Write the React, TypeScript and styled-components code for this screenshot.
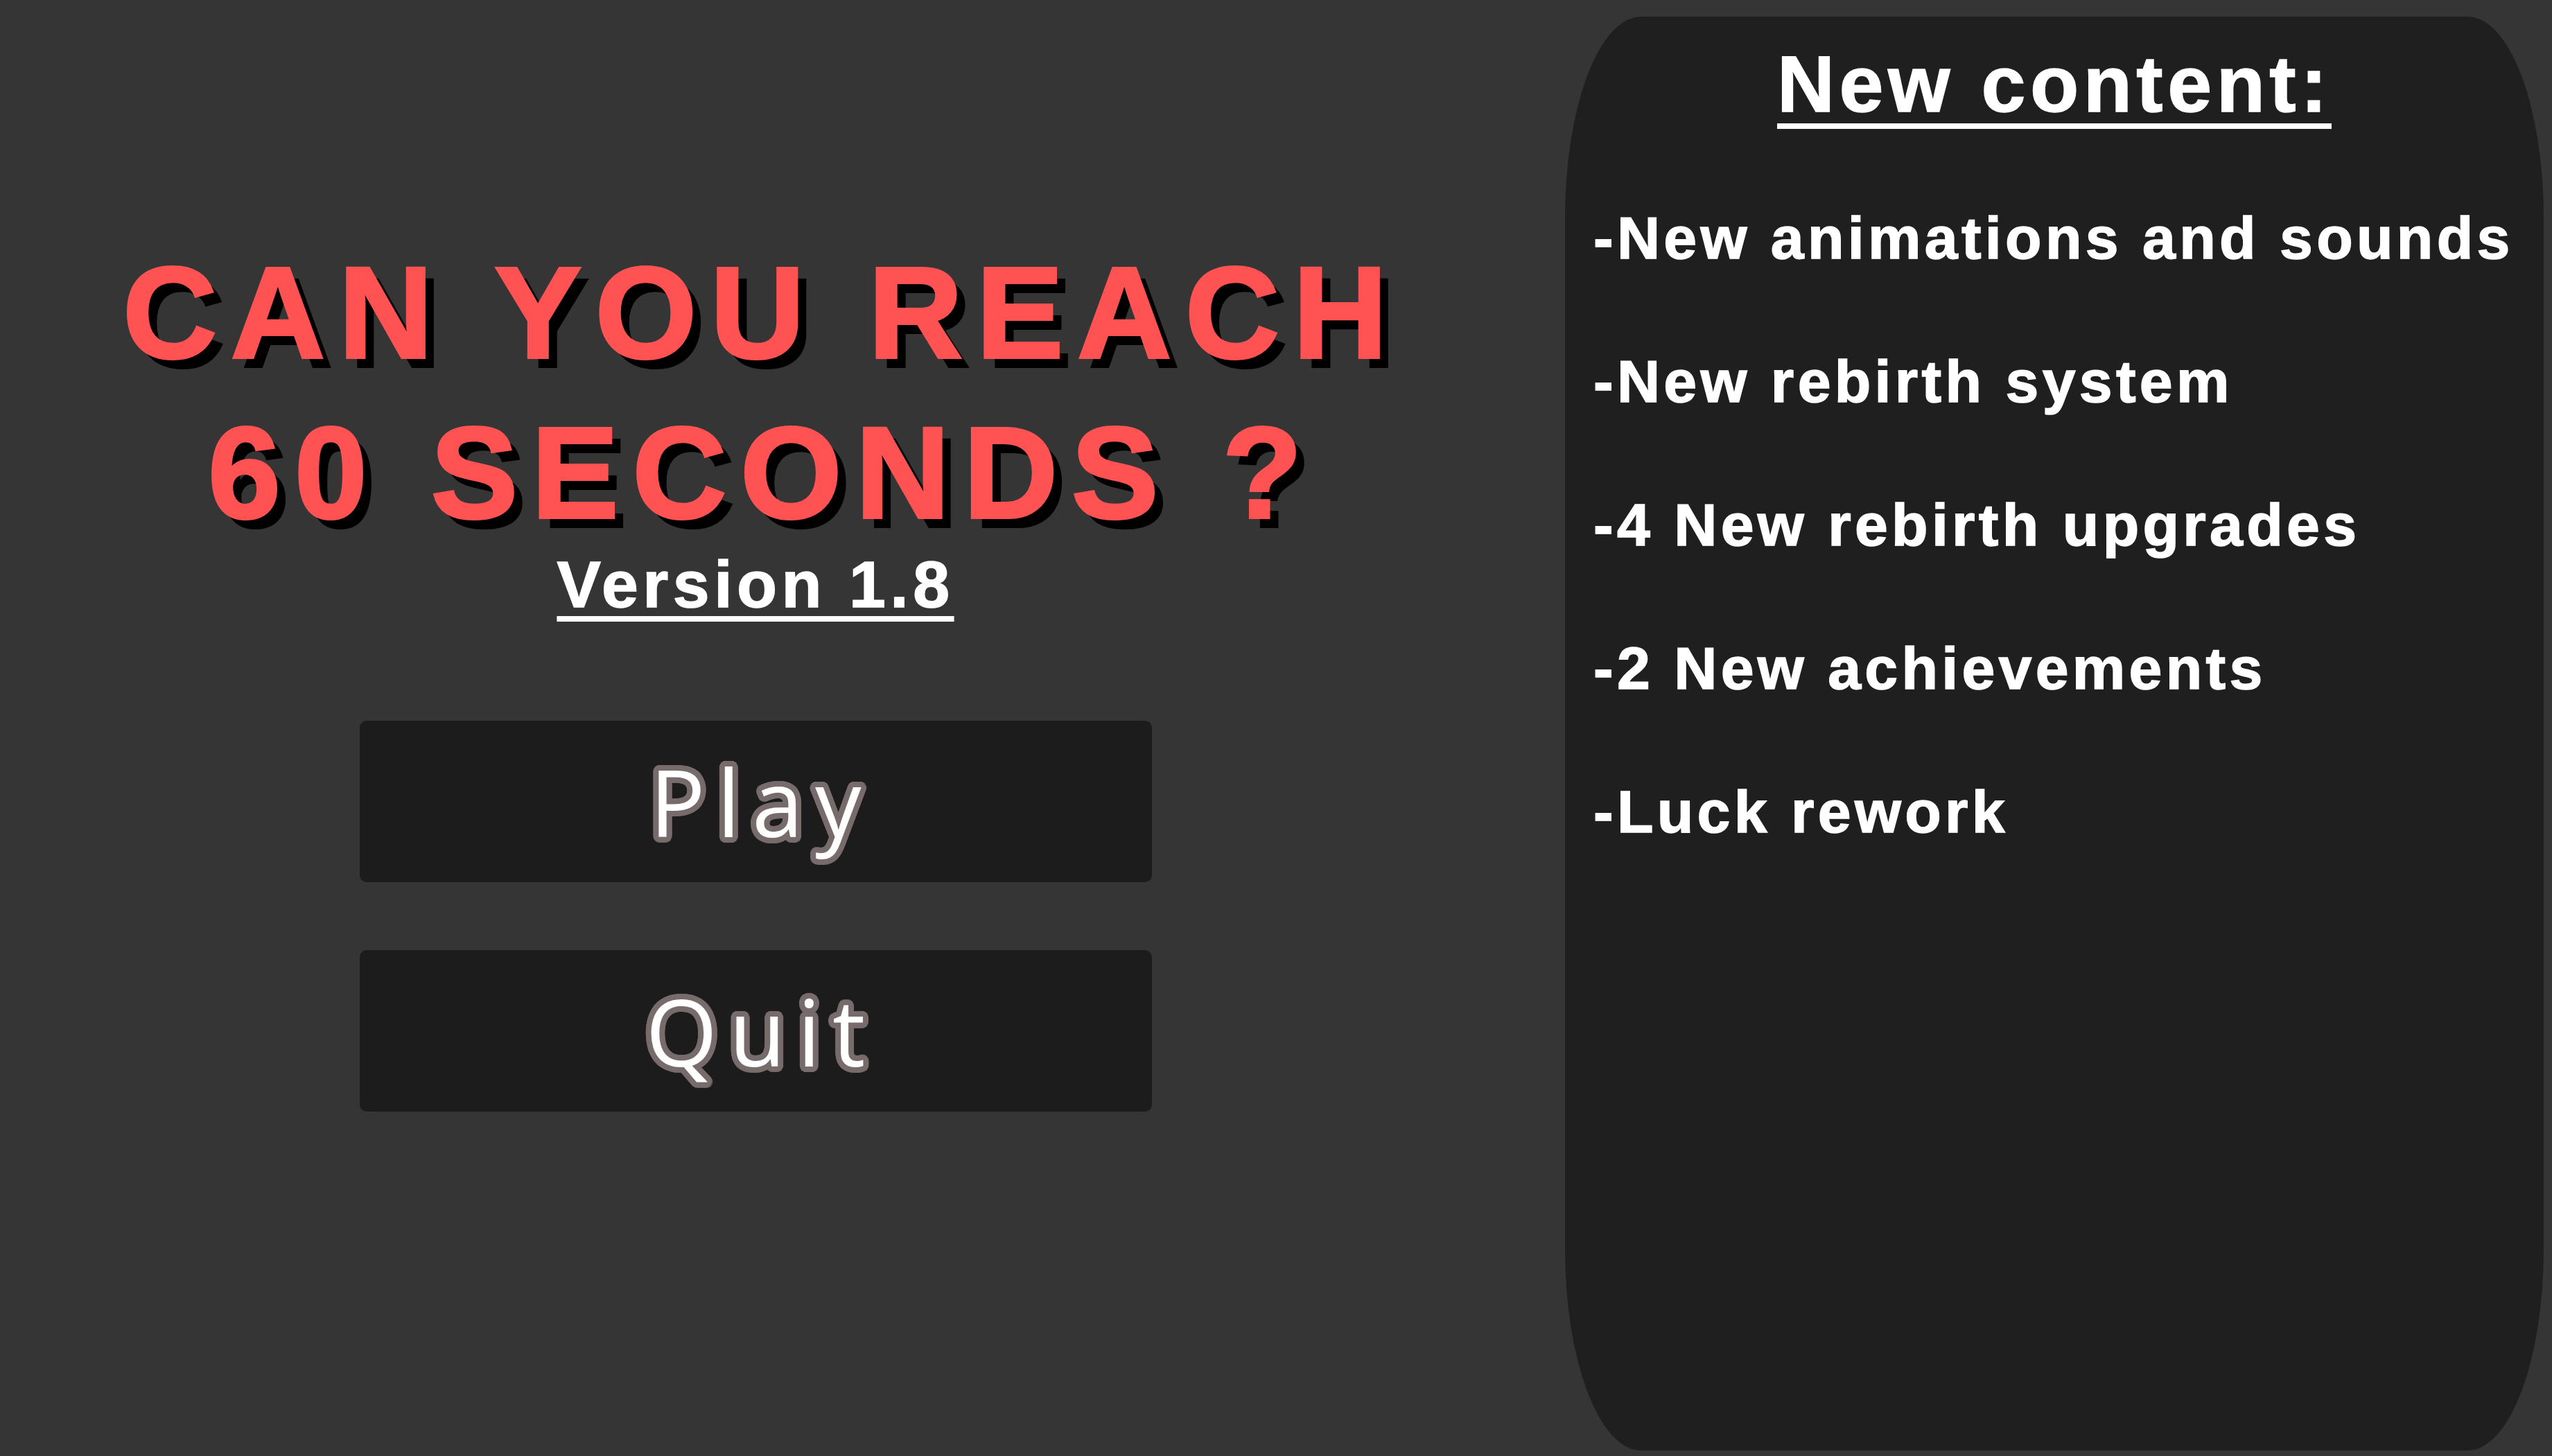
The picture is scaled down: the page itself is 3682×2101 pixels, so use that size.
import styled, { createGlobalStyle } from 'styled-components';

const GlobalStyle = createGlobalStyle`
  html, body {
    margin: 0;
    padding: 0;
    background: #353535;
    overflow: hidden;
  }
`;

// ring of hard shadows, reads as an outline round the glyphs
const outline = (r: number, color: string) =>
  Array.from({ length: 24 }, (_, i) => {
    const a = (i / 24) * Math.PI * 2;
    return `${(Math.cos(a) * r).toFixed(1)}px ${(Math.sin(a) * r).toFixed(1)}px 0 ${color}`;
  }).join(', ');

const Page = styled.main`
  display: flex;
  justify-content: space-between;
  width: 3682px;
  height: 2101px;
  box-sizing: border-box;
  padding: 24px 12px 8px 0;
  font-family: 'Liberation Sans', Arial, sans-serif;
`;

const MenuColumn = styled.section`
  width: 2180px;
  display: flex;
  flex-direction: column;
  align-items: center;
  padding-top: 312px;
`;

const Title = styled.h1`
  margin: 0;
  padding-left: 0.1em;
  font-size: 188px;
  line-height: 231px;
  font-weight: 700;
  letter-spacing: 20px;
  color: #ff5252;
  -webkit-text-stroke: 4px #ff5252;
  text-align: center;
  text-shadow: 14px 15px 0 #000;
`;

const Version = styled.div`
  margin-top: -10px;
  font-size: 95px;
  line-height: 110px;
  font-weight: 700;
  letter-spacing: 6.5px;
  color: #fff;
  -webkit-text-stroke: 1.5px #fff;
  text-decoration: underline;
  text-decoration-thickness: 8px;
  text-underline-offset: 13px;
`;

const ButtonStack = styled.div`
  margin-top: 142px;
  display: flex;
  flex-direction: column;
  gap: 98px;
`;

const MenuButton = styled.button`
  width: 1143px;
  height: 233px;
  display: flex;
  align-items: center;
  justify-content: center;
  padding: 0 0 0 17px;
  border: none;
  border-radius: 10px;
  background: #1c1c1c;
  color: #fff;
  font-family: 'Open Sans', 'Liberation Sans', sans-serif;
  font-size: 133px;
  font-weight: 400;
  letter-spacing: 17px;
  text-shadow: ${outline(8, '#776b6b')}, ${outline(4, '#776b6b')};
  cursor: pointer;
`;

const Panel = styled.aside`
  flex: none;
  width: 1412px;
  box-sizing: border-box;
  padding: 31px 41px 0;
  background: #1f1f1f;
  border-radius: 110px / 290px;
  color: #fff;
`;

const PanelHeading = styled.h2`
  margin: 0;
  font-size: 115px;
  line-height: 133px;
  font-weight: 700;
  letter-spacing: 6.5px;
  -webkit-text-stroke: 1.5px #fff;
  text-align: center;
  text-decoration: underline;
  text-decoration-thickness: 8px;
  text-underline-offset: 17px;
`;

const ChangeList = styled.ul`
  list-style: none;
  margin: 52px 0 0;
  padding: 0;
`;

const ChangeItem = styled.li`
  font-size: 86px;
  line-height: 207px;
  font-weight: 700;
  letter-spacing: 5.3px;
  -webkit-text-stroke: 1.5px #fff;
  white-space: nowrap;
`;

const changes = [
  '-New animations and sounds',
  '-New rebirth system',
  '-4 New rebirth upgrades',
  '-2 New achievements',
  '-Luck rework',
];

export default function App() {
  return (
    <>
      <GlobalStyle />
      <Page>
        <MenuColumn>
          <Title>
            CAN YOU REACH
            <br />
            60 SECONDS ?
          </Title>
          <Version>Version 1.8</Version>
          <ButtonStack>
            <MenuButton>Play</MenuButton>
            <MenuButton>Quit</MenuButton>
          </ButtonStack>
        </MenuColumn>
        <Panel>
          <PanelHeading>New content:</PanelHeading>
          <ChangeList>
            {changes.map((c) => (
              <ChangeItem key={c}>{c}</ChangeItem>
            ))}
          </ChangeList>
        </Panel>
      </Page>
    </>
  );
}
